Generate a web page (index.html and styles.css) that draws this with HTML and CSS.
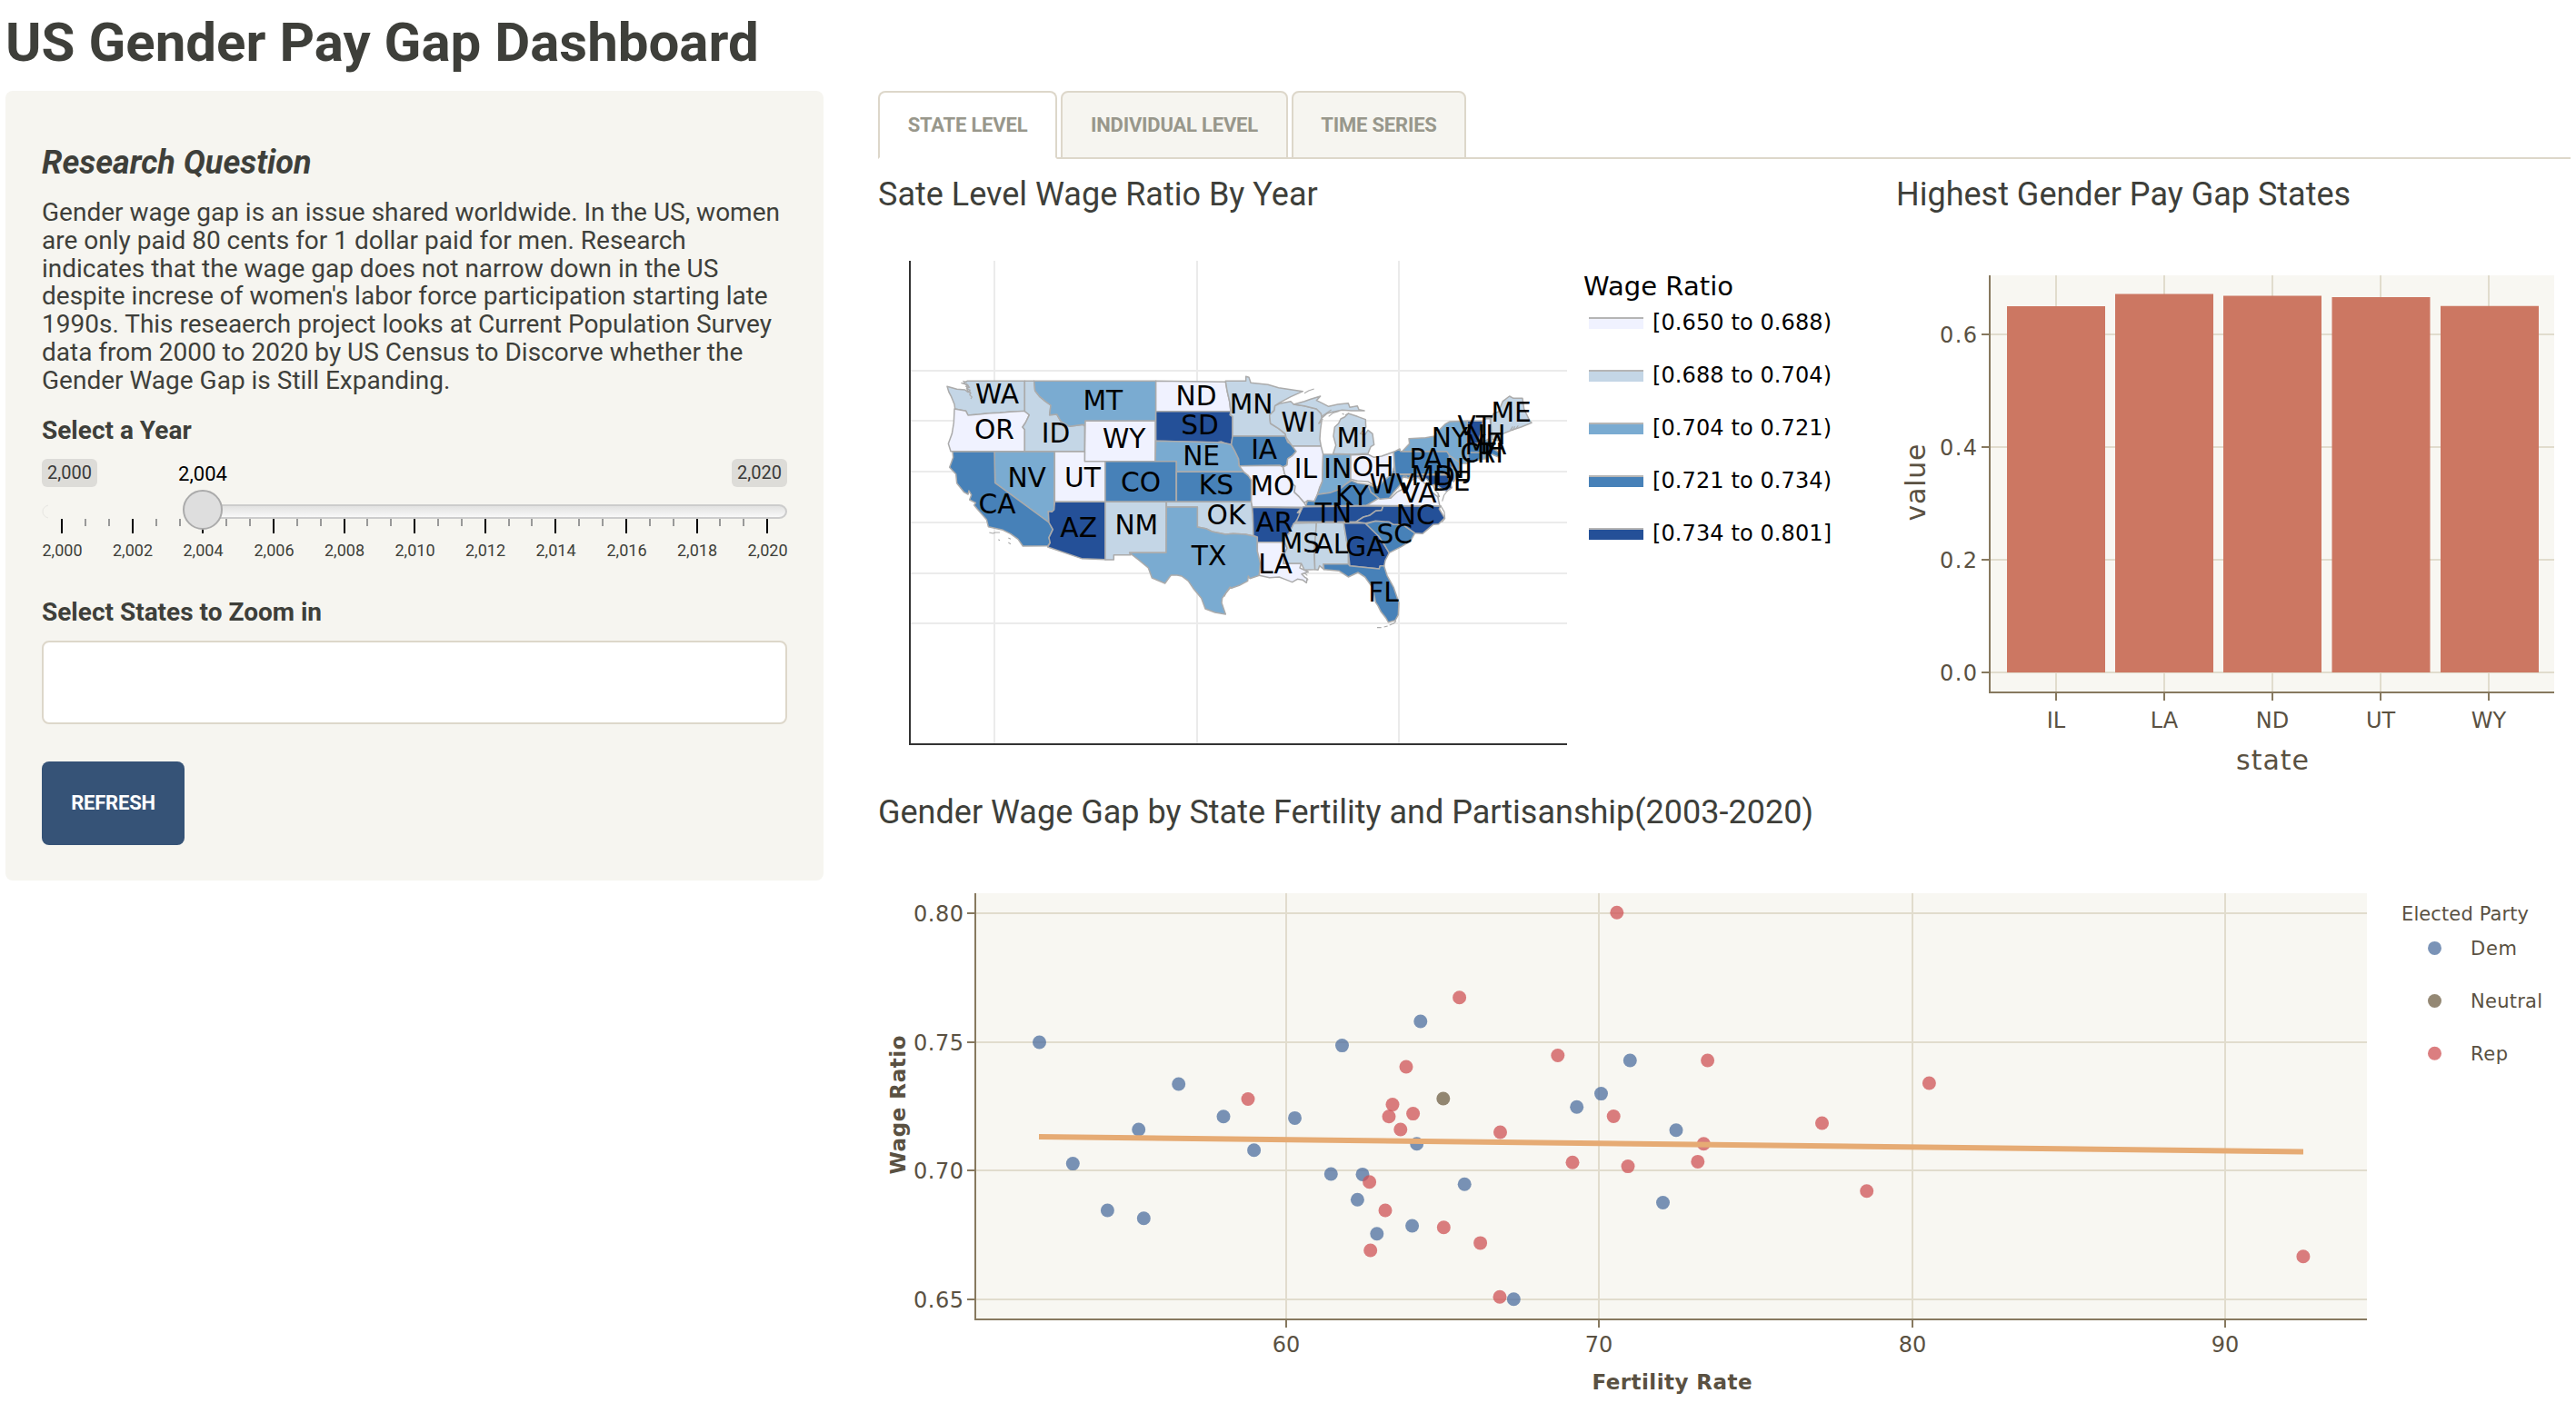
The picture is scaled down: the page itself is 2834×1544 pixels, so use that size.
FILE: index.html
```html
<!DOCTYPE html>
<html lang="en">
<head>
<meta charset="utf-8">
<title>US Gender Pay Gap Dashboard</title>
<link rel="stylesheet" href="styles.css">
</head>
<body>
<h1 class="page-title">US Gender Pay Gap Dashboard</h1>
<div class="layout">
  <aside class="well">
    <h4 class="question">Research Question</h4>
    <p class="intro">Gender wage gap is an issue shared worldwide. In the US, women<br>are only paid 80 cents for 1 dollar paid for men. Research<br>indicates that the wage gap does not narrow down in the US<br>despite increse of women's labor force participation starting late<br>1990s. This reseaerch project looks at Current Population Survey<br>data from 2000 to 2020 by US Census to Discorve whether the<br>Gender Wage Gap is Still Expanding.</p>
    <div class="field-label">Select a Year</div>
    <svg class="slider" viewBox="46 494 820 160">
      <defs>
        <linearGradient id="track" x1="0" y1="0" x2="0" y2="1"><stop offset="0" stop-color="#e0e0df"/><stop offset="1" stop-color="#fafafa"/></linearGradient>
      </defs>
      <rect class="badge" x="46" y="505" width="61" height="31" rx="6"/>
      <text class="limit" x="76.500" y="527">2,000</text>
      <rect class="badge" x="805" y="505" width="61" height="31" rx="6"/>
      <text class="limit" x="835.500" y="527">2,020</text>
      <path class="track-start" d="M53 556 Q47 558 47 563 Q47 568 53 570"/>
      <path class="track" d="M223 556 H857 A8 7 0 0 1 857 570 H223 Z"/>
      <path class="major" d="M68 571v16M146 571v16M223 571v16M301 571v16M379 571v16M456 571v16M534 571v16M611 571v16M689 571v16M767 571v16M844 571v16"/>
      <path class="minor" d="M94 571v8M120 571v8M172 571v8M198 571v8M249 571v8M275 571v8M327 571v8M353 571v8M404 571v8M430 571v8M482 571v8M508 571v8M560 571v8M585 571v8M637 571v8M663 571v8M715 571v8M741 571v8M792 571v8M818 571v8"/>
      <circle class="handle" cx="223" cy="561" r="21"/>
      <text class="current" x="223" y="529">2,004</text>
      <g class="year">
        <text x="68.500" y="612">2,000</text><text x="146" y="612">2,002</text><text x="223.500" y="612">2,004</text><text x="301.500" y="612">2,006</text><text x="379" y="612">2,008</text><text x="456.500" y="612">2,010</text><text x="534" y="612">2,012</text><text x="611.500" y="612">2,014</text><text x="689.500" y="612">2,016</text><text x="767" y="612">2,018</text><text x="844.500" y="612">2,020</text>
      </g>
    </svg>
    <div class="field-label">Select States to Zoom in</div>
    <div class="select-box"></div>
    <button class="refresh">REFRESH</button>
  </aside>
  <main class="content">
    <nav class="tabs">
      <a class="tab active">STATE LEVEL</a>
      <a class="tab">INDIVIDUAL LEVEL</a>
      <a class="tab">TIME SERIES</a>
    </nav>
    <div class="top-row">
      <section>
        <h4>Sate Level Wage Ratio By Year</h4>
        <svg class="map-chart" viewBox="966 233 1120 640">
          <path class="map-grid" d="M1094 287V819M1317 287V819M1539 287V819M1002 408H1724M1002 463H1724M1002 519H1724M1002 575H1724M1002 631H1724M1002 686H1724"/>
          <g class="states" transform="translate(1020 390) scale(.33333)">
            <path class="q2" d="M66 106L98 115 125 117 134 124 130 100 120 95 132 88H322V188L272 190 240 193 205 194 170 198 135 201 128 187 92 180 90 165 80 140 72 125Z"/>
            <path class="q1" d="M90 180L128 187 135 201 170 198 205 194 240 193 272 190 325 187 337 200 325 225 315 240 322 248V320H78L70 295 82 262 88 225Z"/>
            <path class="q2" d="M322 88H353L356 120 372 140 390 155 408 168 404 200 428 198 442 222 470 238 515 232 520 237V320H322V248L315 240 325 225 337 200 322 188Z"/>
            <path class="q3" d="M353 88H755V220H522L520 237 515 232 470 238 442 222 428 198 404 200 408 168 390 155 372 140 356 120Z"/>
            <path class="q1" d="M755 88L985 91 990 120 998 155 1002 188H755Z"/>
            <path class="q5" d="M755 188H1002L1000 200 1008 205V270L1004 298 990 296 970 288 955 291 755 286Z"/>
            <path class="q1" d="M522 220H753V353H520Z"/>
            <path class="q3" d="M755 286L955 290 985 293 1004 298 1015 318 1027 345 1030 368 1045 388H823V353H753Z"/>
            <path class="q3" d="M222 321H421L419 515 412 520 400 518 402 555 224 424Z"/>
            <path class="q1" d="M421 321H520V353H588V487H421Z"/>
            <path class="q4" d="M588 353H822V487H588Z"/>
            <path class="q4" d="M823 388H1045L1062 400 1070 415V487H823Z"/>
            <path class="q4" d="M84 321H222L224 424 402 555 415 578 402 605 406 622 398 632 316 633 300 610 275 592 250 580 202 569 196 545 165 510 155 498 160 490 140 480 146 464 138 450 135 462 122 455 98 425 95 395 85 385 74 373 86 340Z"/>
            <path class="q5" d="M421 487H588V677L510 674 398 636 406 622 402 605 415 578 402 555 400 518 412 520 419 513Z"/>
            <path class="q2" d="M588 487H789V655H668L672 662H616V678H588Z"/>
            <path class="q2" d="M790 487H1070L1075 530 1078 600 1050 594 1010 592 985 594 940 585 920 575 892 570V504H790Z"/>
            <path class="q3" d="M790 504H892V570L920 575 940 585 985 594 1010 592 1050 594 1078 600 1090 603V650L1100 690 1096 730 1065 740 1060 732 1058 748 1030 763 1004 772 1000 768 984 790 974 805 972 820 978 838 985 858 950 852 918 840 905 805 880 775 862 748 840 732 825 729H805L798 738 785 756 742 738 730 705 700 680 668 655H789Z"/>
            <path class="shore" d="M112 94l10 3M118 88l12 4M122 97l14 5-8 4 12 3-10 4 12 5-8 5 10 6-4 4 8 8-4 6M130 96l10 14M138 118l6 10M205 588l12 3 8-3 15 0M235 611l5 3M268 606l8 4M268 621l8 5M980 800l8 -14 12 -14 14 -4"/>
            <g transform="translate(900 0)">
              <path class="q2" d="M85 88H152L152 73 162 76 168 94 225 100 260 110 300 116 340 122 300 140 262 160 248 170 246 185 230 200 233 228 260 245 282 262 285 270H108V205L100 200 102 187 98 155 90 120Z"/>
              <path class="q4" d="M108 270H282L290 290 305 300 318 320 305 335 290 345 288 365 275 372 265 367 130 368 128 345 115 318 104 298Z"/>
              <path class="q1" d="M130 368L265 367 275 372 280 395 298 420 315 435 312 455 328 470 345 490 350 500 340 525 322 523 335 505 173 503 170 487V415L160 400 145 388Z"/>
              <path class="q5" d="M173 505L335 507 322 523 335 525 322 545 310 560 295 590 280 605V620H190V603L177 598 175 530Z"/>
              <path class="q1" d="M190 620H280L288 640 278 660 276 690H335L330 705 345 712 358 718 336 725 348 737 354 740 352 754 340 745 322 742 305 752 280 742 262 735 230 737 196 730 200 690 190 650Z"/>
              <path class="q2" d="M246 185L248 170 262 163 300 155 310 165 345 170 385 180 400 195 403 208 393 228 402 220 398 250 396 280 400 303H305L285 275 282 262 260 245 233 228 230 200Z"/>
              <path class="q2" d="M310 165L345 155 366 148 398 138 385 152 402 160 425 172 455 165 490 161 495 175 520 170 525 182 543 186 500 186 470 184 440 190 420 195 403 210 400 195 385 180 345 170Z"/>
              <path class="q2" d="M440 328L449 300 441 270 445 240 458 228 465 213 478 207 490 195 520 205 547 215 548 240 530 262 545 265 555 250 570 262 575 298 564 305 555 327 500 330Z"/>
              <path class="q1" d="M305 303H400L407 330 404 420 395 440 388 465 378 485 355 483 345 490 328 470 312 455 315 435 298 420 280 395 275 372 288 365 290 345 305 335 318 320Z"/>
              <path class="q3" d="M407 330H498V415L480 430 462 445 430 457 388 463 404 420Z"/>
              <path class="q1" d="M498 332L555 330 575 340 600 336 640 322 642 370 635 395 610 415 585 440 555 420 520 418 498 412Z"/>
              <path class="q4" d="M350 500L355 483 378 485 388 463 430 457 462 445 480 430 500 417 520 425 555 430 565 455 590 475 550 499Z"/>
              <path class="q5" d="M340 503L605 500 600 515 580 517 560 532 540 537 515 553H318L330 525Z"/>
              <path class="q2" d="M310 558L385 556 378 650 380 710 345 712 335 690H276L278 660 288 640 280 620V605L295 590Z"/>
              <path class="q2" d="M385 556H475L490 650V692H408L410 710 395 698 390 712 380 710 378 650Z"/>
              <path class="q5" d="M475 557H548L560 570 590 600 610 630 625 655 612 680 608 700 595 698 592 708 495 698 490 650Z"/>
              <path class="q4" d="M408 692H490L495 698 592 708 595 698 608 698 618 730 640 770 657 820 655 860 645 878 622 884 614 870 598 850 588 830 580 818 575 790 570 770 545 735 522 720 490 735 460 715 410 710Z"/>
              <path class="q4" d="M548 560L580 550 625 553 640 562H670L710 590 695 617 665 635 625 655 610 630 590 600Z"/>
              <path class="q5" d="M515 553L540 537 560 532 580 517 600 515 605 501 795 500 790 510 808 540 788 560 770 562 735 592 710 590 670 562H640L625 553 580 550 548 557Z"/>
              <path class="q1" d="M550 499L590 475H630L650 455 680 440 700 415 720 405 735 420 755 435 760 450 785 470 792 500Z"/>
              <path class="q4" d="M642 370L645 395 700 398 690 408 670 405 662 430 640 455 625 475 595 478 565 455 555 430 585 440 610 415 635 395Z"/>
              <path class="q4" d="M640 322L660 312 662 320 815 320 830 335 822 350 835 368 820 395H645Z"/>
              <path class="q5" d="M700 398H818L828 428 832 440 815 452 800 445 780 430 762 432 750 412 735 404 705 408Z"/>
              <path class="q3" d="M824 330L858 350 855 392 838 420 825 402 835 368 822 350Z"/>
              <path class="q3" d="M668 320L692 295 690 278 745 275 775 270 790 250 810 230 825 222 883 220V270L885 320 882 348 905 345 880 360 862 360 824 334 815 320Z"/>
              <path class="q5" d="M883 220H935L928 255 920 295H885Z"/>
              <path class="q1" d="M935 220L945 212 958 212 962 275 922 295 928 255Z"/>
              <path class="q4" d="M885 295H922L962 280 970 312 990 325 988 340 965 330 885 324Z"/>
              <path class="q4" d="M885 324H935V345L885 358Z"/>
              <path class="q3" d="M935 324H950L948 345 935 345Z"/>
              <path class="q2" d="M960 212L970 195 985 190 1000 155 1022 138 1035 145 1065 145 1070 180 1088 218 1095 226 1060 240 1030 250 1000 262 985 285 964 280Z"/>
              <path class="shore" d="M345 128l14-8 18-6M402 205l20-14 12-8M425 205l15-12 20-6M392 228l14-15M470 195l6 4M480 200l12-6M345 722l10 8M352 745l6-2M585 902l14 0M608 900l12-3M626 894l14-6 8-8M795 500l12 20 2 22-10 12M770 432l6 16 10 10 2 22M800 485l6-20 14-18 4-12M775 448l14-6M785 455l6 16M1025 250l8-12M1032 252l8-14M1045 243l6-8M670 402l12 0 4 6 14-4 14 8"/>
            </g>
          </g>
          <g class="state-names" transform="translate(1020 390) scale(.33333)">
            <text x="231" y="161">WA</text><text x="222" y="279">OR</text><text x="425" y="290">ID</text><text x="580" y="183">MT</text><text x="888" y="167">ND</text><text x="900" y="264">SD</text><text x="650" y="308">WY</text><text x="905" y="365">NE</text><text x="329" y="438">NV</text><text x="513" y="437">UT</text><text x="705" y="452">CO</text><text x="954" y="462">KS</text><text x="231" y="524">CA</text><text x="500" y="603">AZ</text><text x="691" y="593">NM</text><text x="987" y="560">OK</text><text x="930" y="695">TX</text>
            <text x="1070" y="194">MN</text><text x="1226" y="254">WI</text><text x="1112" y="345">IA</text><text x="1403" y="305">MI</text><text x="1249" y="407">IL</text><text x="1355" y="407">IN</text><text x="1472" y="402">OH</text><text x="1140" y="464">MO</text><text x="1402" y="498">KY</text><text x="1341" y="554">TN</text><text x="1146" y="584">AR</text><text x="1230" y="654">MS</text><text x="1335" y="656">AL</text><text x="1149" y="722">LA</text><text x="1446" y="665">GA</text><text x="1543" y="623">SC</text><text x="1612" y="562">NC</text><text x="1506" y="815">FL</text><text x="1646" y="376">PA</text><text x="1725" y="305">NY</text><text x="1534" y="460">WV</text><text x="1624" y="490">VA</text><text x="1670" y="433">MD</text><text x="1730" y="450">DE</text><text x="1754" y="408">NJ</text><text x="1818" y="357">CT</text><text x="1858" y="357">RI</text><text x="1843" y="330">MA</text><text x="1843" y="297">NH</text><text x="1808" y="267">VT</text><text x="1928" y="222">ME</text>
          </g>
          <path class="map-axis" d="M1001 287V819H1724"/>
          <text class="map-legend-title" x="1742" y="325" textLength="165">Wage Ratio</text>
          <g class="map-legend">
            <path class="q1" d="M1748 351h60v11h-60z"/><path class="q2" d="M1748 409h60v11h-60z"/><path class="q3" d="M1748 467h60v11h-60z"/><path class="q4" d="M1748 525h60v11h-60z"/><path class="q5" d="M1748 583h60v11h-60z"/>
            <path class="swatch-edge" d="M1748 350h60M1748 408h60M1748 466h60M1748 524h60M1748 582h60"/>
            <text x="1818" y="362.500" textLength="197">[0.650 to 0.688)</text><text x="1818" y="420.500" textLength="197">[0.688 to 0.704)</text><text x="1818" y="478.500" textLength="197">[0.704 to 0.721)</text><text x="1818" y="536.500" textLength="197">[0.721 to 0.734)</text><text x="1818" y="594.500" textLength="197">[0.734 to 0.801]</text>
          </g>
        </svg>
      </section>
      <section>
        <h4>Highest Gender Pay Gap States</h4>
        <svg class="bar-chart" viewBox="2086 233 742 640">
          <rect class="plot-bg" x="2189" y="303" width="621" height="459"/>
          <path class="grid" d="M2190 368H2810M2190 492H2810M2190 616H2810M2190 740H2810M2262 303V761M2381 303V761M2500 303V761M2619 303V761M2738 303V761"/>
          <path class="bars" d="M2208 337h108v403h-108zM2327 323.500h108v416.500h-108zM2446 325.500h108v414.500h-108zM2565.500 327h108v413h-108zM2685 336.700h108v403.300h-108z"/>
          <path class="axis" d="M2189 303V762H2810M2180 368h9M2180 492h9M2180 616h9M2180 740h9M2262 762v9M2381 762v9M2500 762v9M2619 762v9M2738 762v9"/>
          <g class="tick-y"><text x="2175" y="376.500" textLength="41">0.6</text><text x="2175" y="500.500" textLength="41">0.4</text><text x="2175" y="624.500" textLength="41">0.2</text><text x="2175" y="748.500" textLength="41">0.0</text></g>
          <g class="tick-x"><text x="2262" y="800.500">IL</text><text x="2381" y="800.500">LA</text><text x="2500" y="800.500">ND</text><text x="2619" y="800.500">UT</text><text x="2738" y="800.500">WY</text></g>
          <text class="axis-title" x="2500" y="847" textLength="80">state</text>
          <text class="axis-title" transform="translate(2118 531) rotate(-90)" textLength="85">value</text>
        </svg>
      </section>
    </div>
    <section>
      <h4>Gender Wage Gap by State Fertility and Partisanship(2003-2020)</h4>
      <svg class="scatter-chart" viewBox="966 913 1862 631">
        <rect class="plot-bg" x="1073" y="983" width="1531" height="469"/>
        <path class="grid" d="M1074 1005H2604M1074 1147H2604M1074 1288H2604M1074 1430H2604M1415 983V1451M1759 983V1451M2104 983V1451M2448 983V1451"/>
        <path class="axis" d="M1073 983V1452H2604M1064 1005h9M1064 1147h9M1064 1288h9M1064 1430h9M1415 1452v9M1759 1452v9M2104 1452v9M2448 1452v9"/>
        <g class="dem">
          <circle cx="1143.500" cy="1147" r="7.500"/><circle cx="1296.700" cy="1193" r="7.500"/><circle cx="1346" cy="1228.700" r="7.500"/><circle cx="1252.700" cy="1243" r="7.500"/><circle cx="1379.600" cy="1265.800" r="7.500"/><circle cx="1180.300" cy="1280.600" r="7.500"/><circle cx="1218.400" cy="1332" r="7.500"/><circle cx="1258.300" cy="1340.800" r="7.500"/><circle cx="1424.500" cy="1230.400" r="7.500"/><circle cx="1476.500" cy="1150.600" r="7.500"/><circle cx="1562.800" cy="1124" r="7.500"/><circle cx="1558.700" cy="1258.800" r="7.500"/><circle cx="1464.300" cy="1292" r="7.500"/><circle cx="1499" cy="1292.400" r="7.500"/><circle cx="1493.400" cy="1320.300" r="7.500"/><circle cx="1514.800" cy="1357.800" r="7.500"/><circle cx="1553.600" cy="1349" r="7.500"/><circle cx="1611.200" cy="1303.300" r="7.500"/><circle cx="1665.300" cy="1429.800" r="7.500"/><circle cx="1734.700" cy="1218.200" r="7.500"/><circle cx="1793.300" cy="1167" r="7.500"/><circle cx="1761.500" cy="1203.600" r="7.500"/><circle cx="1844" cy="1243.800" r="7.500"/><circle cx="1829.500" cy="1323.500" r="7.500"/><circle cx="2678.500" cy="1043.400" r="7.500"/>
        </g>
        <g class="neutral"><circle cx="1587.800" cy="1209" r="7.500"/><circle cx="2678.500" cy="1101.500" r="7.500"/></g>
        <g class="rep">
          <circle cx="1373" cy="1209.500" r="7.500"/><circle cx="1605.600" cy="1097.800" r="7.500"/><circle cx="1547" cy="1174" r="7.500"/><circle cx="1532" cy="1215.600" r="7.500"/><circle cx="1528" cy="1228.700" r="7.500"/><circle cx="1554.600" cy="1225.600" r="7.500"/><circle cx="1540.800" cy="1243" r="7.500"/><circle cx="1506.600" cy="1300.700" r="7.500"/><circle cx="1524" cy="1332" r="7.500"/><circle cx="1507.700" cy="1376" r="7.500"/><circle cx="1588.300" cy="1350.800" r="7.500"/><circle cx="1628.600" cy="1367.900" r="7.500"/><circle cx="1650" cy="1427.200" r="7.500"/><circle cx="1650.500" cy="1246" r="7.500"/><circle cx="1713.800" cy="1161.500" r="7.500"/><circle cx="1730" cy="1279.300" r="7.500"/><circle cx="1778.800" cy="1004.300" r="7.500"/><circle cx="1878.600" cy="1167" r="7.500"/><circle cx="2122.400" cy="1192" r="7.500"/><circle cx="1775.200" cy="1228.500" r="7.500"/><circle cx="2004.500" cy="1236" r="7.500"/><circle cx="1874.300" cy="1258.700" r="7.500"/><circle cx="1867.800" cy="1278.400" r="7.500"/><circle cx="1791" cy="1283.600" r="7.500"/><circle cx="2053.700" cy="1310.800" r="7.500"/><circle cx="2533.900" cy="1382.700" r="7.500"/><circle cx="2678.500" cy="1159.300" r="7.500"/>
        </g>
        <path class="trend" d="M1143 1251L2534 1267.400"/>
        <g class="tick-y"><text x="1060" y="1013.500" textLength="55">0.80</text><text x="1060" y="1155.500" textLength="55">0.75</text><text x="1060" y="1296.500" textLength="55">0.70</text><text x="1060" y="1438.500" textLength="55">0.65</text></g>
        <g class="tick-x"><text x="1415" y="1488">60</text><text x="1759" y="1488">70</text><text x="2104" y="1488">80</text><text x="2448" y="1488">90</text></g>
        <text class="bold-title" x="1839.500" y="1529" textLength="176">Fertility Rate</text>
        <text class="bold-title" transform="translate(996 1216) rotate(-90)" textLength="153">Wage Ratio</text>
        <g class="party"><text x="2642" y="1013" textLength="140">Elected Party</text><text x="2718" y="1051" textLength="51">Dem</text><text x="2718" y="1109" textLength="79">Neutral</text><text x="2718" y="1167" textLength="41">Rep</text></g>
      </svg>
    </section>
  </main>
</div>
</body>
</html>
```
FILE: styles.css
```css
* { box-sizing: border-box; }
body { margin: 0; padding: 14px 6px 0; background: #fff; color: #3e3f3a; font: 28px/40px Roboto, sans-serif; overflow: hidden; }
svg { display: block; overflow: visible; }
h1, h4, p { margin: 0; }
.page-title { font-size: 60px; line-height: 66px; font-weight: 700; margin-bottom: 20px; }
.layout { display: flex; gap: 60px; align-items: flex-start; }
.well { width: 900px; height: 869px; padding: 59px 40px 0; background: #f6f5f0; border-radius: 8px; }
.question { font-size: 36px; line-height: 40px; font-weight: 700; font-style: italic; margin-bottom: 20px; }
.intro { line-height: 30.8px; white-space: nowrap; margin-bottom: 19.4px; }
.field-label { font-weight: 700; line-height: 40px; }
.slider { width: 820px; height: 160px; }
.slider text { text-anchor: middle; }
.badge { fill: #dddcd8; }
.limit { font-size: 20px; fill: #3a3a38; }
.current { font-size: 22px; fill: #000; }
.year { font-size: 18px; fill: #3e3f3a; }
.track { fill: url(#track); stroke: #ccc; stroke-width: 2; }
.track-start { fill: none; stroke: #e6e5e1; stroke-width: 1; }
.major { stroke: #000; stroke-width: 2; }
.minor { stroke: #999; stroke-width: 2; }
.handle { fill: #dedede; stroke: #ababab; stroke-width: 2; }
.select-box { height: 92px; margin-top: 11px; background: #fff; border: 2px solid #ddd7ca; border-radius: 8px; }
.refresh { display: block; width: 157px; height: 92px; margin-top: 41px; padding: 0; border: 0; border-radius: 8px; background: #365377; color: #fff; font: 700 22px/92px Roboto, sans-serif; letter-spacing: -.2px; text-align: center; }

.content { width: 1862px; }
.content h4 { height: 40px; padding-top: 1px; font-size: 36px; line-height: 40px; font-weight: 400; white-space: nowrap; }
.tabs { display: flex; gap: 4px; height: 75px; border-bottom: 2px solid #ddd7ca; margin-bottom: 18px; }
.tab { width: 250px; height: 75px; border: 2px solid #ddd7ca; border-radius: 8px 8px 0 0; background: #f6f5f0; color: #98978b; font-size: 22px; line-height: 71px; font-weight: 700; letter-spacing: -.2px; text-align: center; white-space: nowrap; }
.tab.active { width: 197px; background: #fff; border-bottom-color: #fff; }
.tab:last-child { width: 192px; }
.top-row { display: grid; grid-template-columns: 1120px 742px; }
.map-chart { width: 1120px; height: 640px; }
.bar-chart { width: 742px; height: 640px; }
.scatter-chart { width: 1862px; height: 631px; }

.content svg { font-family: "DejaVu Sans", Verdana, sans-serif; }
.map-grid { stroke: #ebebeb; stroke-width: 2; }
.map-axis { fill: none; stroke: #333; stroke-width: 2; }
.q1 { fill: #f0f2ff; }
.q2 { fill: #c4d6e6; }
.q3 { fill: #7aabd1; }
.q4 { fill: #4781b8; }
.q5 { fill: #245098; }
.states path { stroke: #ababab; stroke-width: 4.5; stroke-linejoin: round; }
.states .shore { fill: none; stroke-width: 3.5; }
.state-names text { font-size: 89px; text-anchor: middle; fill: #000; }
.map-legend-title { font-size: 29px; }
.map-legend { font-size: 24px; }
.swatch-edge { stroke: #b5b5b5; stroke-width: 2; }

.plot-bg { fill: #f8f7f2; }
.grid { stroke: #e1dccd; stroke-width: 2; }
.axis { fill: none; stroke: #87795f; stroke-width: 2; }
.bars { fill: #cc7762; }
.tick-y, .tick-x { font-size: 24px; fill: #5a5142; }
.tick-y { text-anchor: end; }
.tick-x { text-anchor: middle; }
.axis-title { font-size: 30px; fill: #5a5142; text-anchor: middle; }
.bold-title { font-size: 23px; font-weight: 700; fill: #5a5142; text-anchor: middle; }
.party { font-size: 21px; fill: #5a5142; }
.dem { fill: #4d6f9f; }
.neutral { fill: #706046; }
.rep { fill: #cf5355; }
.dem circle, .neutral circle, .rep circle { fill-opacity: .75; }
.trend { stroke: #e6ab74; stroke-width: 6; }
```
